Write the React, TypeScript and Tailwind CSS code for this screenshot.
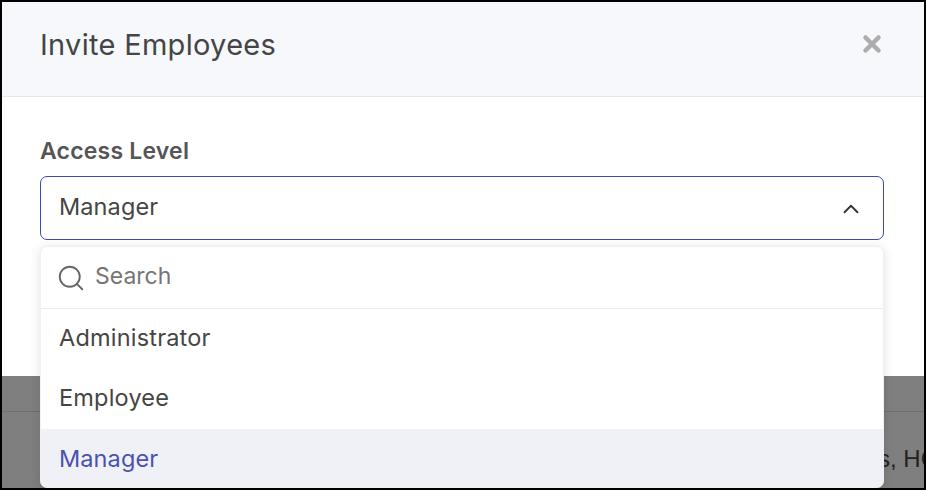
import { ChevronUp, Search, X } from 'lucide-react';

const options = ['Administrator', 'Employee', 'Manager'];

export default function App() {
  return (
    <div className="w-[926px] h-[490px] border-2 border-black overflow-hidden flex flex-col bg-white font-['Inter',sans-serif]">
      <div className="relative flex-1 flex flex-col">
        <div className="h-[95px] shrink-0 bg-[#f6f8fb] border-b border-[#e5e7eb] pl-[38px] pr-[39px] flex items-center justify-between">
          <h1 className="text-[29px] tracking-[0.3px] text-[#454545] font-normal pb-[9px]">Invite Employees</h1>
          <X className="w-[26px] h-[26px] text-[#adadad] mb-[11px]" strokeWidth={4.2} />
        </div>
        <div className="h-[279px] shrink-0 bg-white pl-[38px] pr-[40px] pt-[40px]">
          <label className="block text-[23px] tracking-[0.2px] leading-[28px] font-semibold text-[#555555]">Access Level</label>
          <div className="mt-[11px] h-[64px] border border-[#3f4ab0] rounded-[7px] pl-[18px] pr-[19px] flex items-center justify-between">
            <span className="text-[23.5px] tracking-[0.1px] text-[#454545] pb-[2px]">Manager</span>
            <ChevronUp className="w-[26px] h-[26px] text-[#333333] mt-[1px]" strokeWidth={1.7} />
          </div>
        </div>
        <div className="flex-1 bg-[#7f7f7f] flex flex-col">
          <div className="h-[36px] shrink-0 border-b border-[#6f6f6f]" />
          <div className="flex-1 flex justify-end items-start pt-[29px] overflow-hidden">
            <span className="text-[24px] leading-[36px] text-[#222222] whitespace-nowrap font-['Liberation_Sans',sans-serif] -mr-[14px]">s, HC</span>
          </div>
        </div>
        {/* open select menu */}
        <div className="absolute left-[38px] top-[244px] w-[844px] h-[242px] bg-white rounded-[7px] border border-[#f0f0f0] shadow-[0_2px_12px_rgba(0,0,0,0.12)] overflow-hidden flex flex-col">
          <div className="h-[62px] shrink-0 border-b border-[#ececec] pl-[15px] flex items-center gap-[9px]">
            <Search className="w-[30px] h-[30px] text-[#666666]" strokeWidth={1.5} />
            <span className="text-[23px] text-[#757575] pb-[2px]">Search</span>
          </div>
          {options.map((o) => (
            <div
              key={o}
              className={
                o === 'Manager'
                  ? 'h-[60px] shrink-0 pl-[18px] flex items-center text-[23.5px] tracking-[0.1px] bg-[#f0f1f7] text-[#4a52ad]'
                  : 'h-[60px] shrink-0 pl-[18px] pb-[2px] flex items-center text-[23.5px] tracking-[0.2px] text-[#454545]'
              }
            >
              {o}
            </div>
          ))}
        </div>
      </div>
    </div>
  );
}
